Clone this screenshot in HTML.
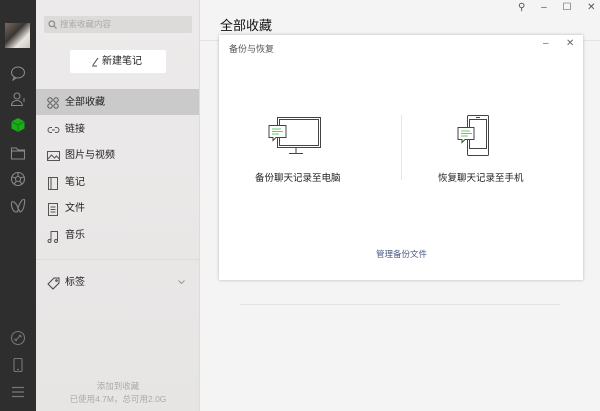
<!DOCTYPE html>
<html><head><meta charset="utf-8"><style>
*{margin:0;padding:0;box-sizing:border-box}
body{width:600px;height:411px;overflow:hidden;position:relative;font-family:"Liberation Sans","Noto Sans CJK SC",sans-serif;background:#f4f4f4;}
.side{position:absolute;left:0;top:0;width:36px;height:411px;background:#2e2e2e}
.mid{position:absolute;left:36px;top:0;width:164px;height:411px;background:linear-gradient(#eceaea,#e6e5e4);border-right:1px solid #dcdcdc}
.abs{position:absolute}
.ic{position:absolute;left:10px}
.item{position:absolute;left:36px;width:163px;height:26px;font-size:10px;color:#222;line-height:28px;padding-left:29px}
.item svg{position:absolute;left:11px;top:8px}
</style></head><body>
<div class="side">
 <div class="abs" style="left:5px;top:23px;width:25px;height:25px;background:linear-gradient(135deg,#7a6a60,#3b3632 40%,#e8e6e2 70%,#c9c3bd)"></div>
 <svg class="ic" style="top:65px" width="16" height="16" viewBox="0 0 16 16" fill="none" stroke="#888" stroke-width="1.1"><ellipse cx="8" cy="7.5" rx="6.5" ry="5.5"/><path d="M4 12l-1 3 3-2"/></svg>
 <svg class="ic" style="top:91px" width="16" height="16" viewBox="0 0 16 16" fill="none" stroke="#888" stroke-width="1.1"><circle cx="7" cy="5" r="3"/><path d="M1.5 14.5c0-3 2.5-5 5.5-5s5 2 5.5 5z"/><path d="M13 8h2M13 10h2"/></svg>
 <svg class="ic" style="top:117px" width="16" height="16" viewBox="0 0 16 16"><path d="M8 1l6.5 3.5v7L8 15l-6.5-3.5v-7z" fill="#1aad19"/><path d="M1.5 4.5L8 8l6.5-3.5M8 8v7" stroke="#0f7a10" stroke-width=".8" fill="none"/></svg>
 <svg class="ic" style="top:145px" width="16" height="16" viewBox="0 0 16 16" fill="none" stroke="#888" stroke-width="1.1"><path d="M1.5 3h5l1.5 2h6.5v9h-13z"/><path d="M1.5 6h13"/></svg>
 <svg class="ic" style="top:171px" width="16" height="16" viewBox="0 0 16 16" fill="none" stroke="#888" stroke-width="1.1"><circle cx="8" cy="8" r="6.5"/><circle cx="8" cy="8" r="2.5"/><path d="M8 1.5v4M14 6l-4 1M12 13l-2.5-3M4 13l2.5-3M2 6l4 1"/></svg>
 <svg class="ic" style="top:199px" width="16" height="16" viewBox="0 0 16 16" fill="none" stroke="#888" stroke-width="1.1"><path d="M8 9C6 3 2 1 1.5 4S3 13 6 13 8 9 8 9 10 13 10 13s3.5 0 4.5-9S10 3 8 9z"/></svg>
 <svg class="ic" style="top:330px" width="16" height="16" viewBox="0 0 16 16" fill="none" stroke="#777" stroke-width="1.1"><circle cx="8" cy="8" r="6.5"/><path d="M6 10l4-4M9 5.5a1.5 1.5 0 012 2M7 10.5a1.5 1.5 0 01-2-2"/></svg>
 <svg class="ic" style="top:357px" width="16" height="16" viewBox="0 0 16 16" fill="none" stroke="#777" stroke-width="1.1"><rect x="4" y="1.5" width="8" height="13" rx="1"/><path d="M7 12.5h2"/></svg>
 <svg class="ic" style="top:384px" width="16" height="16" viewBox="0 0 16 16" fill="none" stroke="#777" stroke-width="1.2"><path d="M2 3.5h12M2 8h12M2 12.5h12"/></svg>
</div>
<div class="mid"></div>
<div class="abs" style="left:44px;top:16px;width:148px;height:17px;background:#dcdbda;border-radius:2px;font-size:8.5px;color:#aaa;line-height:17px;padding-left:16px">搜索收藏内容
 <svg class="abs" style="left:4px;top:4px" width="9" height="9" viewBox="0 0 9 9" fill="none" stroke="#888" stroke-width="1.2"><circle cx="3.8" cy="3.8" r="2.8"/><path d="M6 6l2.5 2.5"/></svg></div>
<div class="abs" style="left:70px;top:50px;width:96px;height:23px;background:#fff;border-radius:2px;font-size:10px;color:#222;line-height:23px;text-align:center;padding-left:8px">新建笔记
 <svg class="abs" style="left:21px;top:6px" width="11" height="11" viewBox="0 0 11 11" fill="none" stroke="#444" stroke-width="1"><path d="M2 9l5-7M1 10h5"/></svg></div>
<div class="item" style="top:89px;background:#cbcaca">全部收藏<svg width="12" height="12" viewBox="0 0 12 12" fill="none" stroke="#555"><circle cx="3" cy="3" r="2.2"/><circle cx="9" cy="3" r="2.2"/><circle cx="3" cy="9" r="2.2"/><circle cx="9" cy="9" r="2.2"/></svg></div>
<div class="item" style="top:116px">链接<svg width="13" height="12" viewBox="0 0 13 12" fill="none" stroke="#555"><path d="M5 3.5H3.5a2.5 2.5 0 000 5H5M8 3.5h1.5a2.5 2.5 0 010 5H8M5 6h3"/></svg></div>
<div class="item" style="top:142px">图片与视频<svg width="13" height="12" viewBox="0 0 13 12" fill="none" stroke="#555"><rect x=".5" y="1.5" width="12" height="9"/><path d="M1 9l3.5-4 3 3 2-2 3 3"/></svg></div>
<div class="item" style="top:169px">笔记<svg width="12" height="13" viewBox="0 0 12 13" fill="none" stroke="#555"><rect x="1.5" y=".5" width="9" height="12"/><path d="M4 .5v12"/></svg></div>
<div class="item" style="top:195px">文件<svg width="12" height="13" viewBox="0 0 12 13" fill="none" stroke="#555"><rect x="1.5" y=".5" width="9" height="12"/><path d="M3.5 4h5M3.5 6.5h5M3.5 9h5"/></svg></div>
<div class="item" style="top:222px">音乐<svg width="12" height="13" viewBox="0 0 12 13" fill="none" stroke="#555"><path d="M4 11V1.5h6.5V11"/><circle cx="2.5" cy="11" r="1.5"/><circle cx="9" cy="11" r="1.5"/></svg></div>
<div class="abs" style="left:36px;top:259px;width:163px;border-top:1px solid #dcdbda"></div>
<div class="item" style="top:269px">标签<svg width="13" height="13" viewBox="0 0 13 13" fill="none" stroke="#444"><path d="M7 1h5v5l-6 6-5-5z"/><circle cx="9.5" cy="3.5" r=".8"/></svg>
 <svg class="abs" style="left:142px;top:11px" width="7" height="5" viewBox="0 0 7 5" fill="none" stroke="#999"><path d="M.5 .5L3.5 3.5 6.5 .5"/></svg></div>
<div class="abs" style="left:36px;top:380px;width:164px;text-align:center;font-size:8.5px;color:#aaa;line-height:13px">添加到收藏<br>已使用4.7M，总可用2.0G</div>

<div class="abs" style="left:220px;top:15px;font-size:13px;color:#111">全部收藏</div>
<div class="abs" style="left:200px;top:40px;width:400px;border-top:1px solid #e4e4e4"></div>
<div class="abs" style="left:518px;top:2px;font-size:10px;color:#555;word-spacing:13px;letter-spacing:0">⚲ – ☐ ✕</div>
<div class="abs" style="left:240px;top:304px;width:320px;border-top:1px solid #e4e4e4"></div>

<div class="abs" style="left:219px;top:35px;width:364px;height:245px;background:#fff;box-shadow:0 0 3px rgba(0,0,0,.25)">
 <div class="abs" style="left:10px;top:7px;font-size:9px;color:#555">备份与恢复</div>
 <div class="abs" style="left:324px;top:3px;font-size:10px;color:#666">–</div>
 <div class="abs" style="left:347px;top:3px;font-size:10px;color:#666">✕</div>
 <div class="abs" style="left:182px;top:80px;height:65px;border-left:1px solid #e6e6e6"></div>
 <svg class="abs" style="left:48px;top:82px" width="55" height="40" viewBox="0 0 55 40" fill="none" stroke="#444" stroke-width="1"><rect x="10.5" y=".5" width="43" height="30"/><rect x="12.5" y="2.5" width="39" height="26"/><path d="M29 31v5M22 36.5h14"/><path d="M2 8.5h17v12H9l-3 3v-3H2z" fill="#fff"/><path d="M5 12h9M5 14.5h11M5 17h7" stroke="#5fcf5f"/></svg>
 <div class="abs" style="left:36px;top:135px;font-size:9.5px;color:#222">备份聊天记录至电脑</div>
 <svg class="abs" style="left:237px;top:80px" width="40" height="44" viewBox="0 0 40 44" fill="none" stroke="#444" stroke-width="1"><rect x="11.5" y=".5" width="21" height="40" rx="1"/><rect x="13.5" y="4.5" width="17" height="29"/><path d="M20 2.5h4"/><path d="M2 12.5h16v12H9l-3 3v-3H2z" fill="#fff"/><path d="M5 16h9M5 18.5h11M5 21h7" stroke="#5fcf5f"/></svg>
 <div class="abs" style="left:219px;top:135px;font-size:9.5px;color:#222">恢复聊天记录至手机</div>
 <div class="abs" style="left:157px;top:213px;font-size:8.5px;color:#4a5a80">管理备份文件</div>
</div>
</body></html>
